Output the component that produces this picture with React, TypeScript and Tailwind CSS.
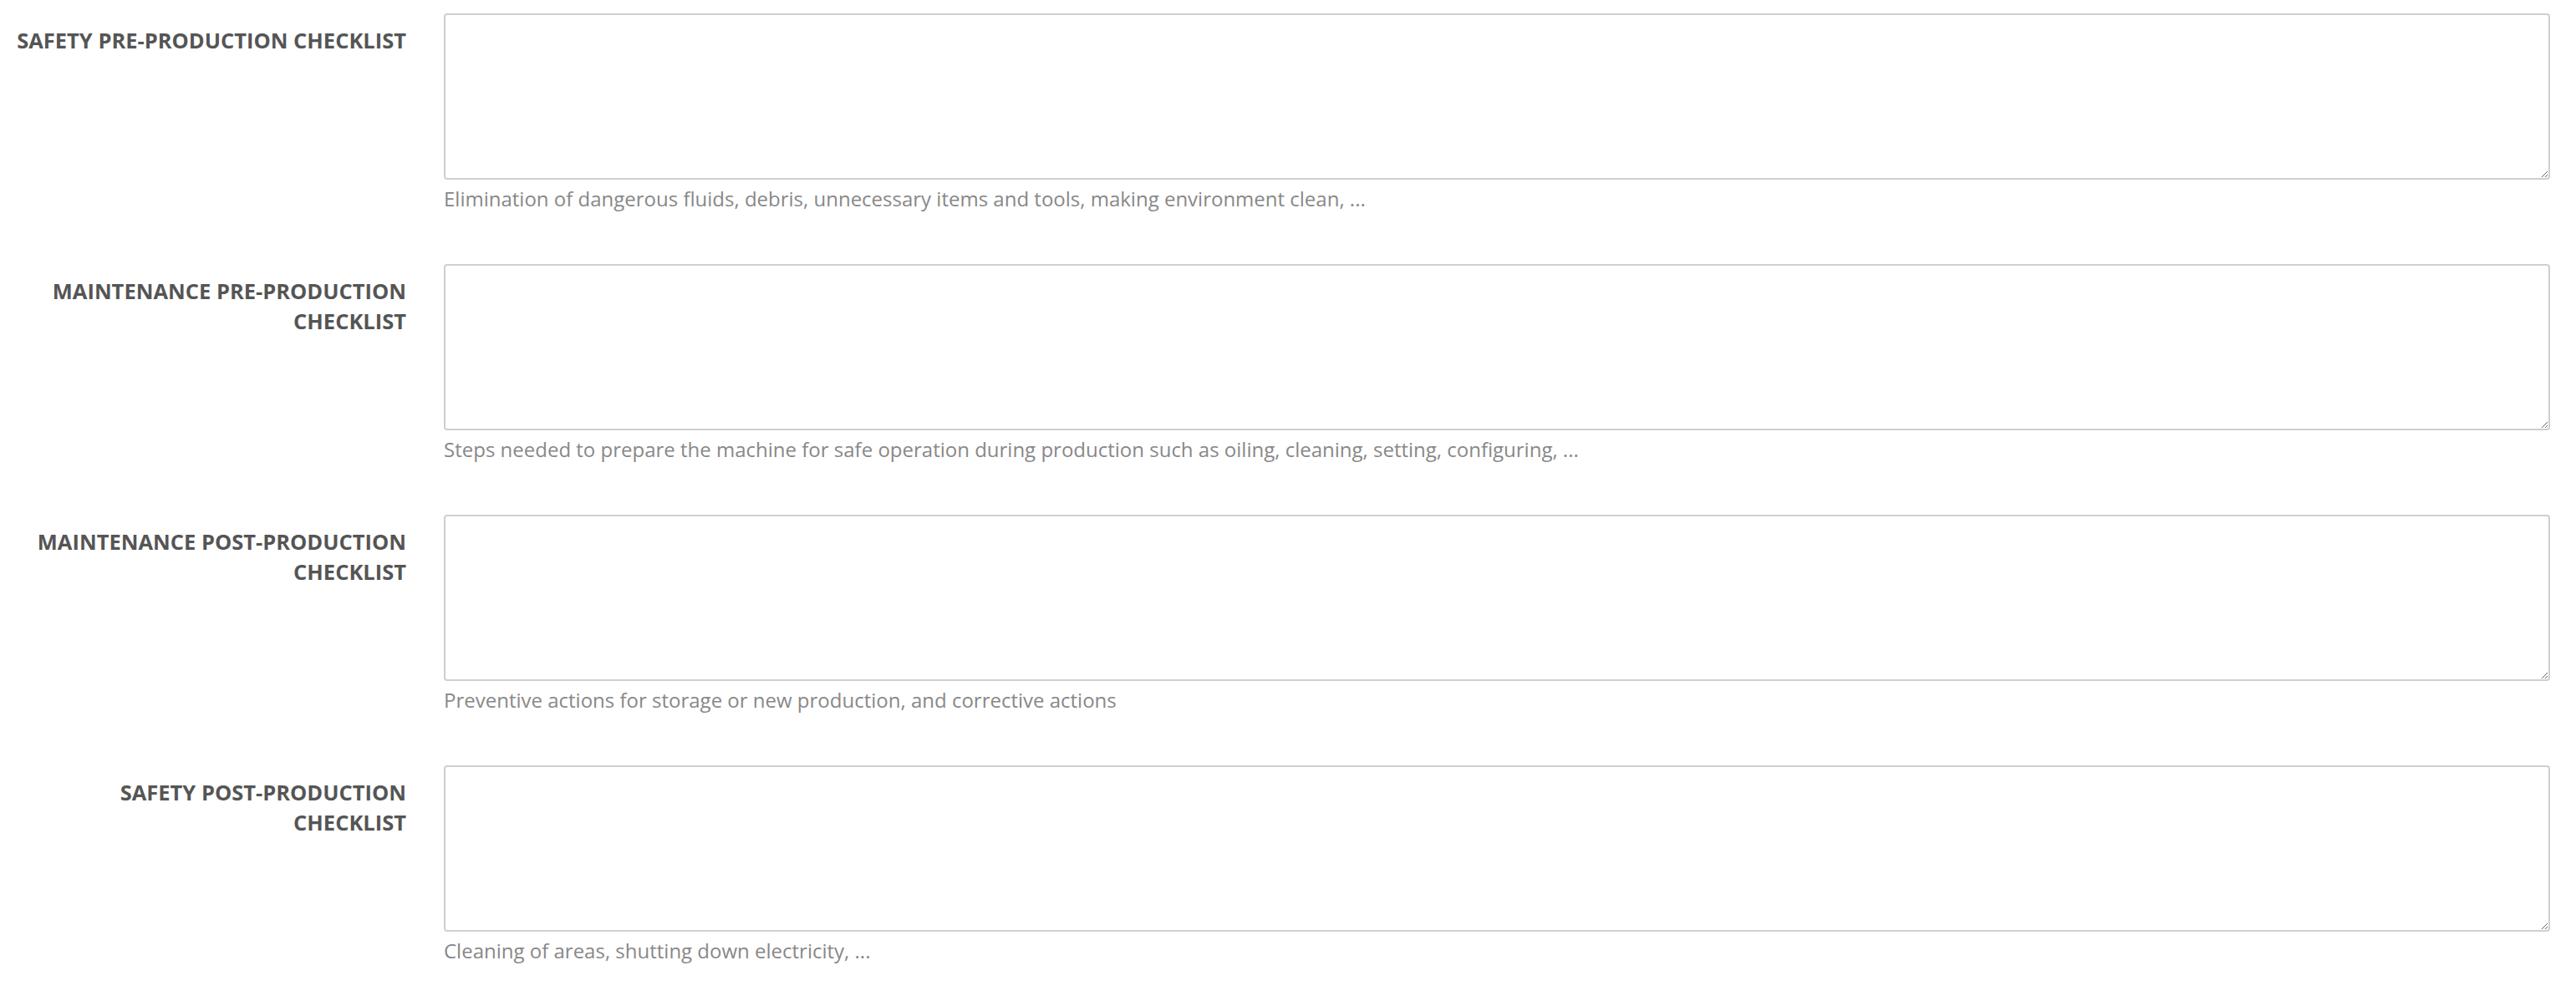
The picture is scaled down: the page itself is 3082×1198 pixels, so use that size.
const rows = [
  {
    label: ["SAFETY PRE-PRODUCTION CHECKLIST"],
    help: "Elimination of dangerous fluids, debris, unnecessary items and tools, making environment clean, ...",
  },
  {
    label: ["MAINTENANCE PRE-PRODUCTION", "CHECKLIST"],
    help: "Steps needed to prepare the machine for safe operation during production such as oiling, cleaning, setting, configuring, ...",
  },
  {
    label: ["MAINTENANCE POST-PRODUCTION", "CHECKLIST"],
    help: "Preventive actions for storage or new production, and corrective actions",
  },
  {
    label: ["SAFETY POST-PRODUCTION", "CHECKLIST"],
    help: "Cleaning of areas, shutting down electricity, ...",
  },
];

export default function App() {
  return (
    <div className="min-h-screen bg-white pt-[16px] font-['Open_Sans',sans-serif]">
      {rows.map((row) => (
        <div key={row.help} className="flex mb-[61px]">
          {/* label column */}
          <label className="w-[486px] shrink-0 pt-[14px] text-right text-[25.5px] leading-[36px] font-bold text-[#555555]">
            {row.label.map((line) => (
              <div key={line}>{line}</div>
            ))}
          </label>
          <div className="flex-1 ml-[45px] mr-[31px]">
            <textarea className="block w-full h-[199px] border-2 border-[#cfcfcf] rounded-[4px] bg-white outline-none" />
            <p className="mt-[6px] text-[24px] leading-[34px] text-[#888888]">{row.help}</p>
          </div>
        </div>
      ))}
    </div>
  );
}
